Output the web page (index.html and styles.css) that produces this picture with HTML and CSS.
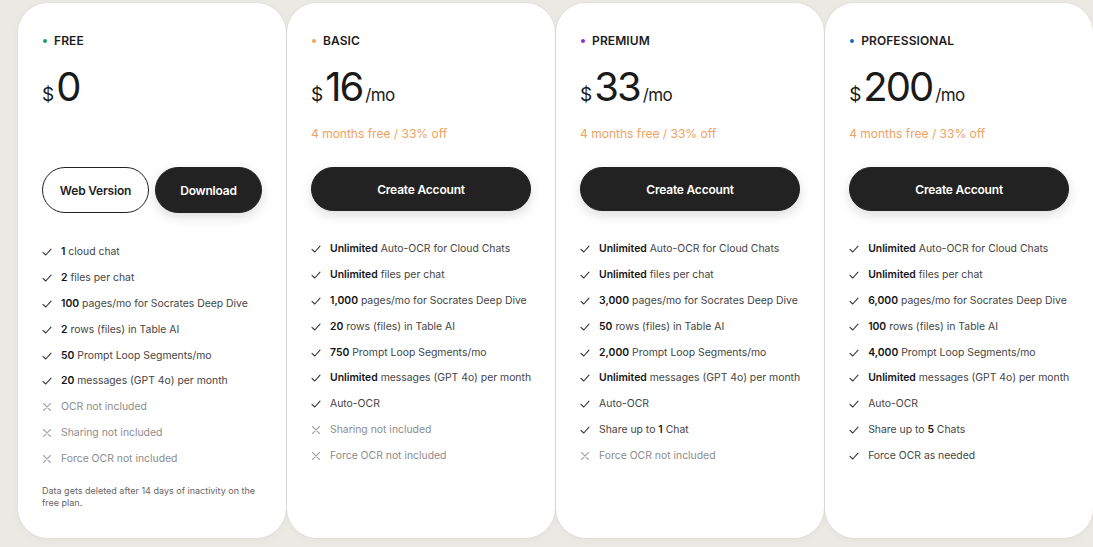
FILE: index.html
```html
<!DOCTYPE html>
<html lang="en">
<head>
<meta charset="utf-8">
<title>Pricing</title>
<link rel="stylesheet" href="styles.css">
</head>
<body>
<div class="plans">
  <section class="card">
    <div class="tier"><span class="dot dot-free"></span>FREE</div>
    <div class="price"><span class="cur">$</span><span class="amt">0</span></div>
    <div class="deal deal-empty"></div>
    <div class="actions actions-free">
      <button class="btn btn-outline btn-half">Web Version</button>
      <button class="btn btn-dark btn-half">Download</button>
    </div>
    <ul class="features features-free">
      <li class="yes"><svg class="ic" viewBox="0 0 10 10"><path d="M1 5.4 L3.8 8 L9 2.2"/></svg><span><b>1</b> cloud chat</span></li>
      <li class="yes"><svg class="ic" viewBox="0 0 10 10"><path d="M1 5.4 L3.8 8 L9 2.2"/></svg><span><b>2</b> files per chat</span></li>
      <li class="yes"><svg class="ic" viewBox="0 0 10 10"><path d="M1 5.4 L3.8 8 L9 2.2"/></svg><span><b>100</b> pages/mo for Socrates Deep Dive</span></li>
      <li class="yes"><svg class="ic" viewBox="0 0 10 10"><path d="M1 5.4 L3.8 8 L9 2.2"/></svg><span><b>2</b> rows (files) in Table AI</span></li>
      <li class="yes"><svg class="ic" viewBox="0 0 10 10"><path d="M1 5.4 L3.8 8 L9 2.2"/></svg><span><b>50</b> Prompt Loop Segments/mo</span></li>
      <li class="yes"><svg class="ic" viewBox="0 0 10 10"><path d="M1 5.4 L3.8 8 L9 2.2"/></svg><span><b>20</b> messages (GPT 4o) per month</span></li>
      <li class="no"><svg class="ic" viewBox="0 0 10 10"><path d="M1.5 1.5 L8.5 8.5 M8.5 1.5 L1.5 8.5"/></svg><span>OCR not included</span></li>
      <li class="no"><svg class="ic" viewBox="0 0 10 10"><path d="M1.5 1.5 L8.5 8.5 M8.5 1.5 L1.5 8.5"/></svg><span>Sharing not included</span></li>
      <li class="no"><svg class="ic" viewBox="0 0 10 10"><path d="M1.5 1.5 L8.5 8.5 M8.5 1.5 L1.5 8.5"/></svg><span>Force OCR not included</span></li>
    </ul>
    <p class="note">Data gets deleted after 14 days of inactivity on the free plan.</p>
  </section>

  <section class="card">
    <div class="tier"><span class="dot dot-basic"></span>BASIC</div>
    <div class="price"><span class="cur">$</span><span class="amt">16</span><span class="per">/mo</span></div>
    <div class="deal">4 months free / 33% off</div>
    <div class="actions"><button class="btn btn-dark btn-full">Create Account</button></div>
    <ul class="features">
      <li class="yes"><svg class="ic" viewBox="0 0 10 10"><path d="M1 5.4 L3.8 8 L9 2.2"/></svg><span><b>Unlimited</b> Auto-OCR for Cloud Chats</span></li>
      <li class="yes"><svg class="ic" viewBox="0 0 10 10"><path d="M1 5.4 L3.8 8 L9 2.2"/></svg><span><b>Unlimited</b> files per chat</span></li>
      <li class="yes"><svg class="ic" viewBox="0 0 10 10"><path d="M1 5.4 L3.8 8 L9 2.2"/></svg><span><b>1,000</b> pages/mo for Socrates Deep Dive</span></li>
      <li class="yes"><svg class="ic" viewBox="0 0 10 10"><path d="M1 5.4 L3.8 8 L9 2.2"/></svg><span><b>20</b> rows (files) in Table AI</span></li>
      <li class="yes"><svg class="ic" viewBox="0 0 10 10"><path d="M1 5.4 L3.8 8 L9 2.2"/></svg><span><b>750</b> Prompt Loop Segments/mo</span></li>
      <li class="yes"><svg class="ic" viewBox="0 0 10 10"><path d="M1 5.4 L3.8 8 L9 2.2"/></svg><span><b>Unlimited</b> messages (GPT 4o) per month</span></li>
      <li class="yes"><svg class="ic" viewBox="0 0 10 10"><path d="M1 5.4 L3.8 8 L9 2.2"/></svg><span>Auto-OCR</span></li>
      <li class="no"><svg class="ic" viewBox="0 0 10 10"><path d="M1.5 1.5 L8.5 8.5 M8.5 1.5 L1.5 8.5"/></svg><span>Sharing not included</span></li>
      <li class="no"><svg class="ic" viewBox="0 0 10 10"><path d="M1.5 1.5 L8.5 8.5 M8.5 1.5 L1.5 8.5"/></svg><span>Force OCR not included</span></li>
    </ul>
  </section>

  <section class="card">
    <div class="tier"><span class="dot dot-premium"></span>PREMIUM</div>
    <div class="price"><span class="cur">$</span><span class="amt">33</span><span class="per">/mo</span></div>
    <div class="deal">4 months free / 33% off</div>
    <div class="actions"><button class="btn btn-dark btn-full">Create Account</button></div>
    <ul class="features">
      <li class="yes"><svg class="ic" viewBox="0 0 10 10"><path d="M1 5.4 L3.8 8 L9 2.2"/></svg><span><b>Unlimited</b> Auto-OCR for Cloud Chats</span></li>
      <li class="yes"><svg class="ic" viewBox="0 0 10 10"><path d="M1 5.4 L3.8 8 L9 2.2"/></svg><span><b>Unlimited</b> files per chat</span></li>
      <li class="yes"><svg class="ic" viewBox="0 0 10 10"><path d="M1 5.4 L3.8 8 L9 2.2"/></svg><span><b>3,000</b> pages/mo for Socrates Deep Dive</span></li>
      <li class="yes"><svg class="ic" viewBox="0 0 10 10"><path d="M1 5.4 L3.8 8 L9 2.2"/></svg><span><b>50</b> rows (files) in Table AI</span></li>
      <li class="yes"><svg class="ic" viewBox="0 0 10 10"><path d="M1 5.4 L3.8 8 L9 2.2"/></svg><span><b>2,000</b> Prompt Loop Segments/mo</span></li>
      <li class="yes"><svg class="ic" viewBox="0 0 10 10"><path d="M1 5.4 L3.8 8 L9 2.2"/></svg><span><b>Unlimited</b> messages (GPT 4o) per month</span></li>
      <li class="yes"><svg class="ic" viewBox="0 0 10 10"><path d="M1 5.4 L3.8 8 L9 2.2"/></svg><span>Auto-OCR</span></li>
      <li class="yes"><svg class="ic" viewBox="0 0 10 10"><path d="M1 5.4 L3.8 8 L9 2.2"/></svg><span>Share up to <b>1</b> Chat</span></li>
      <li class="no"><svg class="ic" viewBox="0 0 10 10"><path d="M1.5 1.5 L8.5 8.5 M8.5 1.5 L1.5 8.5"/></svg><span>Force OCR not included</span></li>
    </ul>
  </section>

  <section class="card">
    <div class="tier"><span class="dot dot-pro"></span>PROFESSIONAL</div>
    <div class="price"><span class="cur">$</span><span class="amt">200</span><span class="per">/mo</span></div>
    <div class="deal">4 months free / 33% off</div>
    <div class="actions"><button class="btn btn-dark btn-full">Create Account</button></div>
    <ul class="features">
      <li class="yes"><svg class="ic" viewBox="0 0 10 10"><path d="M1 5.4 L3.8 8 L9 2.2"/></svg><span><b>Unlimited</b> Auto-OCR for Cloud Chats</span></li>
      <li class="yes"><svg class="ic" viewBox="0 0 10 10"><path d="M1 5.4 L3.8 8 L9 2.2"/></svg><span><b>Unlimited</b> files per chat</span></li>
      <li class="yes"><svg class="ic" viewBox="0 0 10 10"><path d="M1 5.4 L3.8 8 L9 2.2"/></svg><span><b>6,000</b> pages/mo for Socrates Deep Dive</span></li>
      <li class="yes"><svg class="ic" viewBox="0 0 10 10"><path d="M1 5.4 L3.8 8 L9 2.2"/></svg><span><b>100</b> rows (files) in Table AI</span></li>
      <li class="yes"><svg class="ic" viewBox="0 0 10 10"><path d="M1 5.4 L3.8 8 L9 2.2"/></svg><span><b>4,000</b> Prompt Loop Segments/mo</span></li>
      <li class="yes"><svg class="ic" viewBox="0 0 10 10"><path d="M1 5.4 L3.8 8 L9 2.2"/></svg><span><b>Unlimited</b> messages (GPT 4o) per month</span></li>
      <li class="yes"><svg class="ic" viewBox="0 0 10 10"><path d="M1 5.4 L3.8 8 L9 2.2"/></svg><span>Auto-OCR</span></li>
      <li class="yes"><svg class="ic" viewBox="0 0 10 10"><path d="M1 5.4 L3.8 8 L9 2.2"/></svg><span>Share up to <b>5</b> Chats</span></li>
      <li class="yes"><svg class="ic" viewBox="0 0 10 10"><path d="M1 5.4 L3.8 8 L9 2.2"/></svg><span>Force OCR as needed</span></li>
    </ul>
  </section>
</div>
</body>
</html>
```

FILE: styles.css
```css
* { box-sizing: border-box; }
html, body { margin: 0; padding: 0; }
body {
  background: #ebe9e3;
  font-family: Inter, "Noto Sans", sans-serif;
  color: #1f1f1f;
  width: 1093px;
  height: 547px;
  overflow: hidden;
}
.plans {
  display: flex;
  gap: 1px;
  padding: 3px 0 0 18px;
}
.card {
  flex: 0 0 268px;
  height: 535px;
  background: #ffffff;
  border-radius: 30px;
  padding: 30px 24px 0 24px;
  box-shadow: 0 0 0 1px rgba(0,0,0,0.025), 0 2px 8px rgba(0,0,0,0.03);
}
.tier {
  display: flex;
  align-items: center;
  height: 16px;
  font-size: 12px;
  line-height: 16px;
  font-weight: 600;
  letter-spacing: 0.1px;
  color: #1c1c1c;
}
.dot {
  width: 4px;
  height: 4px;
  border-radius: 50%;
  margin: 0 7px 0 1px;
}
.dot-free { background: #1e9e78; }
.dot-basic { background: #f2a25c; }
.dot-premium { background: #8a2de0; }
.dot-pro { background: #1d6bbd; }
.price {
  display: flex;
  align-items: baseline;
  height: 50px;
  margin-top: 13px;
  line-height: 50px;
  color: #1a1a1a;
}
.cur { font-size: 19px; margin-right: 2px; }
.amt { font-size: 40px; font-weight: 400; letter-spacing: -2px; }
.per { font-size: 17px; margin-left: 3px; letter-spacing: -0.6px; }
.deal {
  height: 16px;
  margin-top: 14px;
  font-size: 12px;
  line-height: 16px;
  color: #f0a262;
}
.actions {
  display: flex;
  gap: 6px;
  margin-top: 25px;
}
.btn {
  font-family: inherit;
  font-size: 12px;
  font-weight: 600;
  border-radius: 999px;
  cursor: pointer;
  letter-spacing: -0.2px;
}
.btn-dark {
  background: #222222;
  color: #ffffff;
  border: 1px solid #222222;
  box-shadow: 0 4px 12px rgba(0,0,0,0.14);
}
.btn-outline {
  background: #ffffff;
  color: #1f1f1f;
  border: 1px solid #222222;
}
.btn-full { width: 220px; height: 44px; }
.btn-half { width: 107px; height: 46px; }
.features {
  list-style: none;
  margin: 25px 0 0 0;
  padding: 0;
}
.features-free { margin-top: 26px; }
.features li {
  display: flex;
  align-items: center;
  height: 25.8px;
  font-size: 10.4px;
  white-space: nowrap;
  color: #444444;
}
.features li b { font-weight: 600; color: #151515; }
.ic {
  width: 10px;
  height: 10px;
  flex: 0 0 10px;
  margin: 1px 9px 0 0;
  fill: none;
  stroke-width: 1.1;
  stroke-linecap: round;
  stroke-linejoin: round;
}
.yes .ic { stroke: #333333; }
.features li.no { color: #8c8c8c; }
.no .ic { stroke: #a8a8a8; }
.note {
  margin: 14px 0 0 0;
  font-size: 9px;
  line-height: 12px;
  color: #666666;
}
```
